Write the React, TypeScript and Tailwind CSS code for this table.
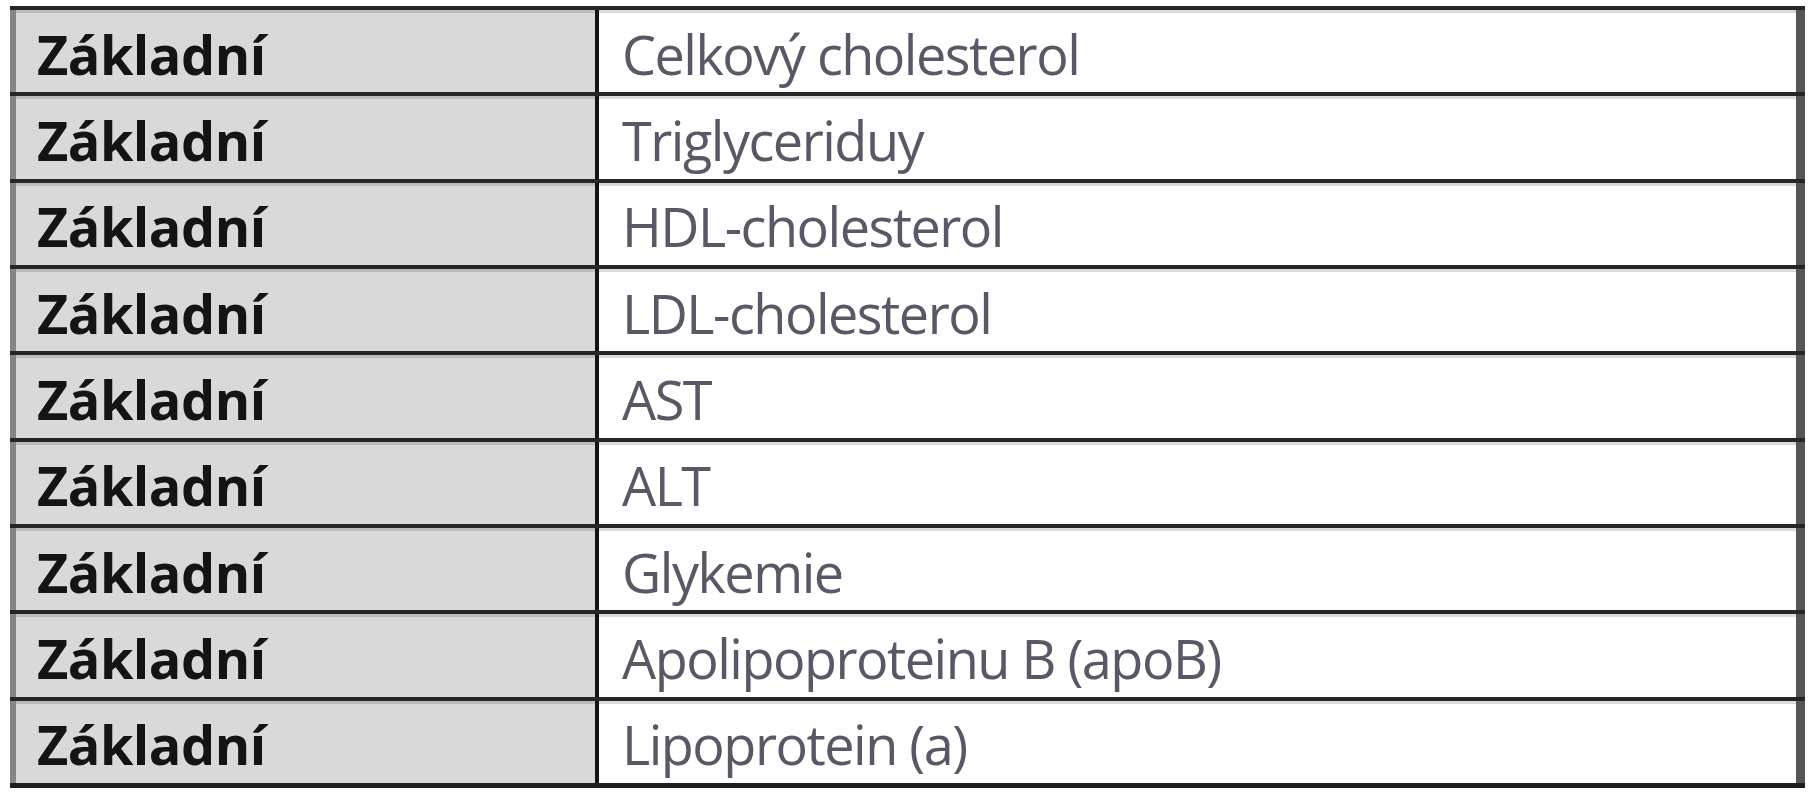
import React from 'react'

const rows = [
  'Celkový cholesterol',
  'Triglyceriduy',
  'HDL-cholesterol',
  'LDL-cholesterol',
  'AST',
  'ALT',
  'Glykemie',
  'Apolipoproteinu B (apoB)',
  'Lipoprotein (a)',
]

export default function App() {
  return (
    <div className="w-full h-[800px] bg-white pt-[6px] pl-[10px]" style={{ fontFamily: '"Open Sans", "Noto Sans", sans-serif' }}>
      <div className="w-[1795px] flex flex-col border-b-[5px] border-[#1e1e1e]">
        {rows.map((name, i) => (
          <div key={i} className="flex h-[86.33px] border-t-4 border-[#262626]">
            {/* left cell */}
            <div className="w-[589px] flex items-center pl-[21px] pt-[6px] bg-[#d9d9d9] border-l-[6px] border-[#858585] border-r-4 border-r-[#141414] shadow-[inset_0_3px_0_#bcbcbc]">
              <span className="text-[54px] font-bold text-[#141414] tracking-[-0.5px]">Základní</span>
            </div>
            {/* right cell */}
            <div className="flex-1 flex items-center pl-[23px] pt-[6px] bg-white border-r-[9px] border-r-[#555555] shadow-[inset_0_3px_0_#dadada]">
              <span className="text-[54px] text-[#585866] tracking-[-1.5px]">{name}</span>
            </div>
          </div>
        ))}
      </div>
    </div>
  )
}
